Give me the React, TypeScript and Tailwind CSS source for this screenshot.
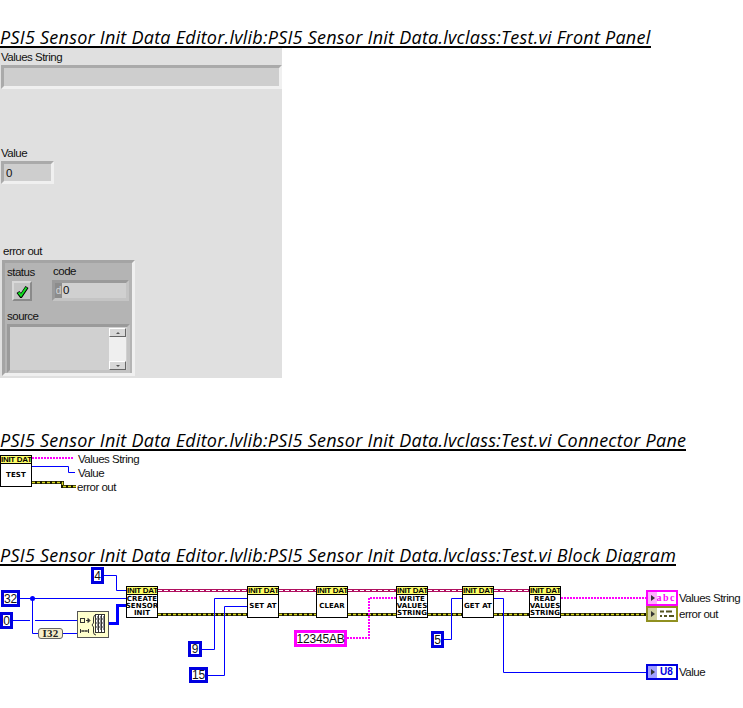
import type { ReactNode } from "react"

// ─── Shared ──────────────────────────────────────────────────────────────────

function Title({ children, className = "" }: { children: ReactNode; className?: string }) {
  return (
    <div className={`h-[24px] border-b-2 border-black font-['Open_Sans',sans-serif] italic text-[18px] leading-[27px] tracking-[0.25px] text-black whitespace-nowrap w-fit ${className}`}>
      {children}
    </div>
  )
}

function Label({ children, className = "" }: { children: ReactNode; className?: string }) {
  return <div className={`font-['Liberation_Sans',sans-serif] text-[11.5px] leading-[14px] text-[#111] tracking-[-0.5px] whitespace-nowrap ${className}`}>{children}</div>
}

// ─── Wires ───────────────────────────────────────────────────────────────────

function Path({ d, kind }: { d: string; kind: "int" | "array" | "str" | "err" | "cls" }) {
  if (kind === "int") return <path d={d} fill="none" stroke="#0000ff" strokeWidth="1" />
  if (kind === "array") return <path d={d} fill="none" stroke="#0000ff" strokeWidth="3" />
  if (kind === "str") return <path d={d} fill="none" stroke="#ff00ff" strokeWidth="2" strokeDasharray="2 1" />
  if (kind === "err")
    return (
      <g fill="none">
        <path d={d} stroke="#1a1a00" strokeWidth="3" />
        <path d={d} stroke="#d8d820" strokeWidth="1.5" strokeDasharray="3 2" />
      </g>
    )
  return (
    <g fill="none">
      <path d={d} stroke="#b01060" strokeWidth="3" />
      <path d={d} stroke="#ffffff" strokeWidth="1" strokeDasharray="4 2" />
    </g>
  )
}

// ─── Diagram parts ───────────────────────────────────────────────────────────

function SubVi({ x, y, lines }: { x: string; y: string; lines: string[] }) {
  return (
    <div className={`absolute ${x} ${y} w-[32px] h-[32px] border border-black bg-white flex flex-col`}>
      <div className="h-[8px] bg-[#ffff66] border-b border-black text-[8px] leading-[7px] font-bold text-black text-center font-['Liberation_Sans',sans-serif] whitespace-nowrap tracking-[-0.3px] overflow-hidden">
        INIT DAT
      </div>
      <div className="flex-1 flex flex-col items-center justify-center text-[7px] leading-[7px] font-bold text-black font-['DejaVu_Sans',sans-serif] tracking-[0.1px] whitespace-nowrap">
        {lines.map((l) => (
          <span key={l}>{l}</span>
        ))}
      </div>
    </div>
  )
}

function Const({ x, y, w, h, text, pink }: { x: string; y: string; w: string; h: string; text: string; pink?: boolean }) {
  return (
    <div
      className={`absolute ${x} ${y} ${w} ${h} border-[3px] ${pink ? "border-[#ff00ff]" : "border-[#0000e0]"} bg-white flex items-center justify-center font-['Liberation_Sans',sans-serif] text-[12px] text-[#111] tracking-[-0.2px]`}
    >
      {text}
    </div>
  )
}

function Terminal({ y, border, tint, children }: { y: string; border: string; tint: string; children: ReactNode }) {
  return (
    <div className={`absolute left-[646px] ${y} w-[32px] h-[16px] border-2 ${border} bg-white flex items-center overflow-hidden`}>
      <div className={`relative w-[9px] h-full ${tint}`}>
        <div className="absolute left-[3px] top-[3px] w-0 h-0 border-y-[3px] border-y-transparent border-l-[4px] border-l-[#333]" />
      </div>
      <div className="flex-1 flex items-center justify-center">{children}</div>
    </div>
  )
}

// the diagram area starts at y=566 of the page
function Diagram() {
  const Y = (n: number) => n - 566
  return (
    <div className="relative h-[142px]">
      <svg className="absolute left-0 top-0" width="743" height="142">
        <Path kind="int" d={`M104 ${Y(575.5)} H116.5 V${Y(590.5)} H127`} />
        <Path kind="int" d={`M19 ${Y(598.5)} H127`} />
        <Path kind="int" d={`M32.5 ${Y(598.5)} V${Y(633.5)} H39`} />
        <Path kind="int" d={`M12 ${Y(620.5)} H30 M35 ${Y(620.5)} H78`} />
        <Path kind="int" d={`M62 ${Y(633.5)} H78`} />
        <Path kind="array" d={`M109 ${Y(623.5)} H117.5 V${Y(605.5)} H127`} />
        <circle cx="32.5" cy={Y(598.5)} r="2.5" fill="#0000ff" />

        <Path kind="cls" d={`M158 ${Y(590.5)} H247 M279 ${Y(590.5)} H316 M348 ${Y(590.5)} H396 M428 ${Y(590.5)} H462 M494 ${Y(590.5)} H529`} />
        <Path kind="err" d={`M158 ${Y(614.5)} H247 M279 ${Y(614.5)} H316 M348 ${Y(614.5)} H396 M428 ${Y(614.5)} H462 M494 ${Y(614.5)} H529 M561 ${Y(614.5)} H646`} />

        <Path kind="int" d={`M201 ${Y(649.5)} H214.5 V${Y(598.5)} H247`} />
        <Path kind="int" d={`M207 ${Y(675.5)} H224.5 V${Y(606.5)} H247`} />
        <Path kind="str" d={`M347 ${Y(638)} H369 V${Y(598)} H396`} />
        <Path kind="int" d={`M443 ${Y(639.5)} H451.5 V${Y(598.5)} H462`} />
        <Path kind="int" d={`M494 ${Y(598.5)} H503.5 V${Y(672.5)} H647`} />
        <Path kind="str" d={`M561 ${Y(598)} H646`} />
      </svg>

      <Const x="left-[91px]" y="top-[1px]" w="w-[13px]" h="h-[17px]" text="4" />
      <Const x="left-[1px]" y="top-[24px]" w="w-[19px]" h="h-[17px]" text="32" />
      <Const x="left-0" y="top-[46px]" w="w-[13px]" h="h-[17px]" text="0" />
      <Const x="left-[188px]" y="top-[75px]" w="w-[14px]" h="h-[16px]" text="9" />
      <Const x="left-[189px]" y="top-[101px]" w="w-[19px]" h="h-[16px]" text="15" />
      <Const x="left-[294px]" y="top-[64px]" w="w-[53px]" h="h-[17px]" text="12345AB" pink />
      <Const x="left-[431px]" y="top-[65px]" w="w-[13px]" h="h-[17px]" text="5" />

      {/* I32 coercion */}
      <div className="absolute left-[38px] top-[62px] w-[25px] h-[11px] bg-[#f6eecb] border border-[#666] rounded-[3px] flex items-center justify-center font-['Liberation_Serif',serif] font-bold text-[11px] leading-none text-[#222] tracking-[0.3px]">
        I32
      </div>

      {/* Initialize Array */}
      <div className="absolute left-[77px] top-[45px] w-[32px] h-[27px] bg-[#ffffcc] border border-[#555] flex items-center overflow-hidden">
        <svg width="30" height="25" viewBox="0 0 30 25">
          <rect x="2.5" y="6.5" width="4" height="4" fill="none" stroke="#333" />
          <path d="M8 8.5 H10 M10 6.5 L12 8.5 L10 10.5 Z" stroke="#333" fill="#333" />
          <path d="M2.5 17 V21 M2.5 19 H10.5 M10.5 17 V21 M5 18 V20 M8 18 V20" stroke="#333" fill="none" />
          <path d="M18 3 Q15.5 3 15.5 6 V11 L14 13 L15.5 15 V20 Q15.5 23 18 23" stroke="#333" fill="none" />
          <rect x="17.5" y="2.5" width="9" height="18" fill="#fff" stroke="#333" />
          <path d="M20.5 3 V20 M23.5 3 V20 M18 7 H26 M18 11 H26 M18 15 H26" stroke="#333" />
          <path d="M19 5 H20 M22 5 H23 M25 5 H26 M19 9 H20 M22 9 H23 M25 9 H26 M19 13 H20 M22 13 H23 M25 13 H26 M19 17 H20 M22 17 H23 M25 17 H26" stroke="#111" />
        </svg>
      </div>

      <SubVi x="left-[126px]" y="top-[20px]" lines={["CREATE", "SENSOR", "INIT"]} />
      <SubVi x="left-[247px]" y="top-[20px]" lines={["SET AT"]} />
      <SubVi x="left-[316px]" y="top-[20px]" lines={["CLEAR"]} />
      <SubVi x="left-[396px]" y="top-[20px]" lines={["WRITE", "VALUES", "STRING"]} />
      <SubVi x="left-[462px]" y="top-[20px]" lines={["GET AT"]} />
      <SubVi x="left-[529px]" y="top-[20px]" lines={["READ", "VALUES", "STRING"]} />

      <Terminal y="top-[24px]" border="border-[#ff00ff]" tint="bg-[#ffb0ff]">
        <span className="font-['Liberation_Serif',serif] font-bold text-[10px] leading-none text-[#ff00ff] tracking-[1.5px]">abc</span>
      </Terminal>
      <Terminal y="top-[40px]" border="border-[#909020]" tint="bg-[#d0d0a0]">
        <svg width="18" height="10" viewBox="0 0 18 10">
          <path d="M2 2.5 H6 M8 2.5 H14 M2 7 H4 M6 7 H9 M11 7 H16" stroke="#555520" strokeWidth="2" />
        </svg>
      </Terminal>
      <Terminal y="top-[98px]" border="border-[#0000e0]" tint="bg-[#a0a0ff]">
        <span className="font-['Liberation_Sans',sans-serif] font-bold text-[10px] leading-none text-[#0000e0]">U8</span>
      </Terminal>

      <Label className="absolute left-[679px] top-[25px]">Values String</Label>
      <Label className="absolute left-[679px] top-[41px]">error out</Label>
      <Label className="absolute left-[679px] top-[99px]">Value</Label>
    </div>
  )
}

// ─── Page ────────────────────────────────────────────────────────────────────

export default function App() {
  return (
    <div className="w-[743px] h-[708px] bg-white overflow-hidden pt-[24px]">
      <Title>PSI5 Sensor Init Data Editor.lvlib:PSI5 Sensor Init Data.lvclass:Test.vi Front Panel</Title>

      {/* Front panel */}
      <div className="w-[282px] h-[330px] bg-[#e0e0e0] flex flex-col">
        <Label className="pl-[1px] pt-[2px]">Values String</Label>
        <div className="ml-[1px] mt-[1px] h-[24px] border-[3px] border-t-[#aaaaaa] border-l-[#aaaaaa] border-r-[#f0f0f0] border-b-[#f0f0f0] bg-[#cecece]" />
        <Label className="pl-[1px] mt-[57px]">Value</Label>
        <div className="ml-[1px] mt-[1px] w-[53px] h-[23px] border-[3px] border-t-[#aaaaaa] border-l-[#aaaaaa] border-r-[#f0f0f0] border-b-[#f0f0f0] bg-[#cecece] flex items-center pl-[2px]">
          <Label>0</Label>
        </div>
        <Label className="pl-[3px] mt-[60px]">error out</Label>

        {/* error cluster */}
        <div className="ml-[2px] mt-[2px] w-[133px] h-[116px] border-[3px] border-t-[#a4a4a4] border-l-[#a4a4a4] border-r-[#f0f0f0] border-b-[#f0f0f0] bg-[#b4b4b4] flex flex-col pl-[1px]">
          <div className="flex">
            <div className="w-[46px] flex flex-col">
              <Label className="pl-[1px] pt-[2px]">status</Label>
              <div className="ml-[6px] mt-[2px] w-[20px] h-[20px] border-2 border-t-[#d8d8d8] border-l-[#d8d8d8] border-r-[#8a8a8a] border-b-[#8a8a8a] bg-[#c4c4c4] flex items-center justify-center">
                <svg width="13" height="13" viewBox="0 0 13 13">
                  <path d="M2 7 L5 11 L11 2" fill="none" stroke="#000" strokeWidth="3.6" />
                  <path d="M2.5 7.5 L5 10.5 L10.5 2.5" fill="none" stroke="#10e020" strokeWidth="2" />
                </svg>
              </div>
            </div>
            <div className="flex flex-col">
              <Label className="pl-[1px] pt-[1px]">code</Label>
              <div className="mt-[2px] w-[77px] h-[21px] border-[3px] border-t-[#9a9a9a] border-l-[#9a9a9a] border-r-[#c4c4c4] border-b-[#c4c4c4] bg-[#d0d0d0] flex items-stretch">
                <div className="w-[7px] bg-[#8c8c8c] text-[#d4d4d4] font-['Liberation_Sans',sans-serif] text-[10px] leading-[15px] text-center">d</div>
                <Label className="pl-[1px] leading-[15px]">0</Label>
              </div>
            </div>
          </div>
          <Label className="pl-[1px] mt-[8px]">source</Label>
          <div className="ml-[1px] mt-[1px] w-[123px] h-[49px] border-[3px] border-t-[#9a9a9a] border-l-[#9a9a9a] border-r-[#c4c4c4] border-b-[#c4c4c4] bg-[#d0d0d0] flex justify-end">
            <div className="w-[17px] h-[42px] mt-[1px] mr-[1px] flex flex-col justify-between bg-[#efefef]">
              <div className="h-[9px] bg-[#d8d8d8] border border-t-white border-l-white border-r-[#666] border-b-[#666] flex items-center justify-center">
                <div className="w-0 h-0 border-x-[2px] border-x-transparent border-b-[2px] border-b-[#555]" />
              </div>
              <div className="h-[9px] bg-[#d8d8d8] border border-t-white border-l-white border-r-[#666] border-b-[#666] flex items-center justify-center">
                <div className="w-0 h-0 border-x-[2px] border-x-transparent border-t-[2px] border-t-[#555]" />
              </div>
            </div>
          </div>
        </div>
      </div>

      {/* Connector pane */}
      <Title className="mt-[49px]">PSI5 Sensor Init Data Editor.lvlib:PSI5 Sensor Init Data.lvclass:Test.vi Connector Pane</Title>
      <div className="relative h-[91px]">
        <svg className="absolute left-0 top-0" width="140" height="50">
          <Path d="M32 7 H74" kind="str" />
          <Path d="M32 15.5 H68.5 V21.5 H75" kind="int" />
          <Path d="M32 31.5 H62.5 V35.5 H76" kind="err" />
        </svg>
        <SubVi x="left-0" y="top-[4px]" lines={["TEST"]} />
        <Label className="absolute left-[78px] top-[1px]">Values String</Label>
        <Label className="absolute left-[78px] top-[15px]">Value</Label>
        <Label className="absolute left-[77px] top-[29px]">error out</Label>
      </div>

      {/* Block diagram */}
      <Title>PSI5 Sensor Init Data Editor.lvlib:PSI5 Sensor Init Data.lvclass:Test.vi Block Diagram</Title>
      <Diagram />
    </div>
  )
}
